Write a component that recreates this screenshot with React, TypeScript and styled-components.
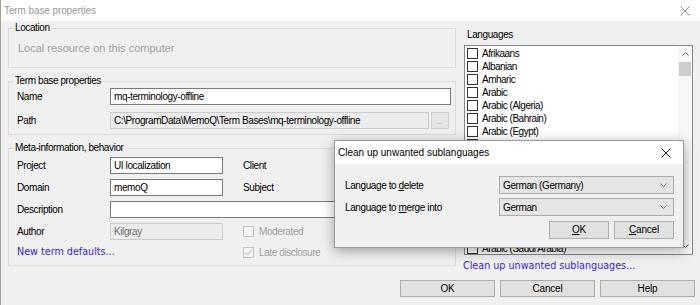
import React from "react";
import styled, { createGlobalStyle } from "styled-components";

const GlobalStyle = createGlobalStyle`
  html, body {
    margin: 0;
    padding: 0;
    background: #f0f0f0;
  }
  body {
    font-family: "Liberation Sans", Arial, sans-serif;
    font-size: 10px;
    letter-spacing: -0.4px;
    color: #000;
  }
  * {
    box-sizing: border-box;
  }
`;

const Window = styled.div`
  position: relative;
  width: 700px;
  height: 305px;
  display: flex;
  flex-direction: column;
  background: #f0f0f0;
  border-left: 1px solid #9aa89a;
  overflow: hidden;
`;

const TitleBar = styled.div<{ $active?: boolean; $h: number; $pr: number }>`
  height: ${(p) => p.$h}px;
  flex: none;
  display: flex;
  align-items: center;
  justify-content: space-between;
  background: #fff;
  padding: 0 ${(p) => p.$pr}px 0 3px;
  color: ${(p) => (p.$active ? "#000" : "#999")};
  letter-spacing: ${(p) => (p.$active ? "0" : "-0.1px")};
`;

const Body = styled.div`
  flex: 1;
  min-height: 0;
  display: flex;
  gap: 6px;
  padding: 0 6px 0 7px;
`;

const LeftCol = styled.div`
  width: 448px;
  flex: none;
  display: flex;
  flex-direction: column;
  gap: 6px;
`;

const Group = styled.fieldset`
  margin: 0;
  padding: 0;
  min-width: 0;
  border: 1px solid #dcdcdc;
`;

const Legend = styled.legend`
  margin-left: 5px;
  padding: 0 1px;
  line-height: 14px;
`;

const LocationText = styled.div`
  padding: 6px 8px 12px 9px;
  font-size: 11px;
  letter-spacing: 0;
  line-height: 14px;
  color: #a0a0a0;
`;

const PropsGrid = styled.div`
  display: grid;
  grid-template-columns: 93px 1fr;
  row-gap: 7px;
  align-items: center;
  padding: 0 4px 5px 8px;
`;

const MetaGrid = styled.div`
  display: grid;
  grid-template-columns: 93px 113px 20px 95px 1fr;
  grid-template-rows: 17px 17px 17px 17px 14px;
  row-gap: 5px;
  align-items: center;
  padding: 2px 4px 6px 8px;
`;

const Label = styled.span<{ $col?: string }>`
  grid-column: ${(p) => p.$col || "auto"};
  white-space: nowrap;
`;

const Field = styled.div<{ $disabled?: boolean; $col?: string }>`
  grid-column: ${(p) => p.$col || "auto"};
  height: 17px;
  display: flex;
  align-items: center;
  padding: 0 3px;
  white-space: nowrap;
  overflow: hidden;
  background: ${(p) => (p.$disabled ? "#ececec" : "#fff")};
  border: 1px solid ${(p) => (p.$disabled ? "#cccccc" : "#7a7a7a")};
  color: ${(p) => (p.$disabled ? "#6d6d6d" : "#000")};
`;

const PathRow = styled.div`
  display: flex;
  gap: 2px;
  padding-right: 2px;
  min-width: 0;
`;

const Browse = styled.div`
  width: 18px;
  height: 17px;
  flex: none;
  display: flex;
  align-items: flex-end;
  justify-content: center;
  padding-bottom: 3px;
  background: #e6e6e6;
  border: 1px solid #cfcfcf;
  color: #a8a8a8;
  font-size: 7px;
  letter-spacing: 0;
`;

const CheckRow = styled.label<{ $col?: string }>`
  grid-column: ${(p) => p.$col || "auto"};
  display: flex;
  align-items: center;
  gap: 5px;
  color: #a0a0a0;
  white-space: nowrap;
`;

const Box = styled.span<{ $disabled?: boolean }>`
  width: 11px;
  height: 11px;
  flex: none;
  display: flex;
  align-items: center;
  justify-content: center;
  background: ${(p) => (p.$disabled ? "#f4f4f4" : "#fff")};
  border: 1px solid ${(p) => (p.$disabled ? "#c4c4c4" : "#333")};
`;

const Link = styled.span<{ $col?: string }>`
  grid-column: ${(p) => p.$col || "auto"};
  font-family: "DejaVu Sans", Verdana, sans-serif;
  font-size: 9.6px;
  letter-spacing: 0;
  line-height: 14px;
  color: #3b23d4;
  white-space: nowrap;
`;

const RightCol = styled.div`
  flex: 1;
  display: flex;
  flex-direction: column;
  padding: 7px 0 0 2px;
`;

const ColTitle = styled.div`
  line-height: 14px;
  padding-left: 3px;
  margin-bottom: 3px;
`;

const ListBox = styled.div`
  height: 210px;
  width: 229px;
  display: flex;
  background: #fff;
  border: 1px solid #828790;
`;

const Items = styled.div`
  flex: 1;
  overflow: hidden;
  padding: 1px 0 0 2px;
`;

const Item = styled.div`
  height: 13px;
  display: flex;
  align-items: center;
  gap: 4px;
  letter-spacing: -0.5px;
  white-space: nowrap;
`;

const ScrollBar = styled.div`
  width: 14px;
  flex: none;
  display: flex;
  flex-direction: column;
  background: #f7f7f7;
`;

const ScrollArrow = styled.div`
  height: 16px;
  display: flex;
  align-items: center;
  justify-content: center;
`;

const Thumb = styled.div`
  height: 14px;
  margin: 0 1px;
  background: #cdcdcd;
`;

const Spacer = styled.div`
  flex: 1;
`;

const BottomLink = styled(Link)`
  margin: 4px 0 0 -1px;
`;

const Footer = styled.div`
  flex: none;
  display: flex;
  justify-content: flex-end;
  gap: 5px;
  padding: 0 5px 8px 0;
`;

const Button = styled.div<{ $w: number; $h: number }>`
  width: ${(p) => p.$w}px;
  height: ${(p) => p.$h}px;
  display: flex;
  align-items: center;
  justify-content: center;
  background: #e1e1e1;
  border: 1px solid #adadad;
  letter-spacing: -0.2px;
`;

const Popup = styled.div`
  position: absolute;
  left: 333px;
  top: 140px;
  width: 350px;
  height: 108px;
  display: flex;
  flex-direction: column;
  background: #f0f0f0;
  border: 1px solid #9a9a9a;
  box-shadow: 0 3px 12px rgba(0, 0, 0, 0.35);
`;

const PopupGrid = styled.div`
  display: grid;
  grid-template-columns: 154px 175px;
  grid-template-rows: 18px 18px 18px;
  row-gap: 4px;
  align-items: center;
  padding: 12px 9px 0 10px;
`;

const Combo = styled.div`
  height: 18px;
  display: flex;
  align-items: center;
  justify-content: space-between;
  padding: 0 6px 0 3px;
  background: #e5e5e5;
  border: 1px solid #acacac;
`;

const PopupButtons = styled.div`
  grid-column: 1 / 3;
  display: flex;
  justify-content: flex-end;
  gap: 5px;
  margin-top: 1px;
`;

const languages = [
  "Afrikaans",
  "Albanian",
  "Amharic",
  "Arabic",
  "Arabic (Algeria)",
  "Arabic (Bahrain)",
  "Arabic (Egypt)",
  "Arabic (Iraq)",
  "Arabic (Jordan)",
  "Arabic (Kuwait)",
  "Arabic (Lebanon)",
  "Arabic (Libya)",
  "Arabic (Morocco)",
  "Arabic (Oman)",
  "Arabic (Qatar)",
  "Arabic (Saudi Arabia)",
  "Arabic (Syria)",
];

const CloseIcon = ({ color }: { color: string }) => (
  <svg width="10" height="10" viewBox="0 0 10 10">
    <path d="M0.5 0.5L9.5 9.5M9.5 0.5L0.5 9.5" stroke={color} strokeWidth="1" fill="none" />
  </svg>
);

const Chevron = ({ up, color }: { up?: boolean; color: string }) => (
  <svg width="7" height="4" viewBox="0 0 7 4">
    <polyline
      points={up ? "0.5,3.5 3.5,0.5 6.5,3.5" : "0.5,0.5 3.5,3.5 6.5,0.5"}
      stroke={color}
      strokeWidth="1"
      fill="none"
    />
  </svg>
);

const Tick = () => (
  <svg width="9" height="9" viewBox="0 0 9 9">
    <polyline points="1,4.5 3.5,7 8,1.5" stroke="#b0b0b0" strokeWidth="1" fill="none" />
  </svg>
);

function App() {
  return (
    <>
      <GlobalStyle />
      <Window>
        <TitleBar $h={21} $pr={10}>
          <span>Term base properties</span>
          <CloseIcon color="#8c8c8c" />
        </TitleBar>
        <Body>
          <LeftCol>
            <Group>
              <Legend>Location</Legend>
              <LocationText>Local resource on this computer</LocationText>
            </Group>
            <Group>
              <Legend>Term base properties</Legend>
              <PropsGrid>
                <Label>Name</Label>
                <Field>mq-terminology-offline</Field>
                <Label>Path</Label>
                <PathRow>
                  <Field $disabled style={{ flex: 1, color: "#000" }}>
                    C:\ProgramData\MemoQ\Term Bases\mq-terminology-offline
                  </Field>
                  <Browse>...</Browse>
                </PathRow>
              </PropsGrid>
            </Group>
            <Group>
              <Legend>Meta-information, behavior</Legend>
              <MetaGrid>
                <Label>Project</Label>
                <Field>UI localization</Field>
                <Label $col="4">Client</Label>
                <Field />
                <Label>Domain</Label>
                <Field>memoQ</Field>
                <Label $col="4">Subject</Label>
                <Field />
                <Label>Description</Label>
                <Field $col="2 / 6" />
                <Label>Author</Label>
                <Field $disabled>Kilgray</Field>
                <CheckRow $col="4 / 6">
                  <Box $disabled />
                  Moderated
                </CheckRow>
                <Link $col="1 / 3">New term defaults...</Link>
                <CheckRow $col="4 / 6">
                  <Box $disabled>
                    <Tick />
                  </Box>
                  Late disclosure
                </CheckRow>
              </MetaGrid>
            </Group>
          </LeftCol>
          <RightCol>
            <ColTitle>Languages</ColTitle>
            <ListBox>
              <Items>
                {languages.map((lang) => (
                  <Item key={lang}>
                    <Box />
                    {lang}
                  </Item>
                ))}
              </Items>
              <ScrollBar>
                <ScrollArrow>
                  <Chevron up color="#606060" />
                </ScrollArrow>
                <Thumb />
                <Spacer />
                <ScrollArrow>
                  <Chevron color="#606060" />
                </ScrollArrow>
              </ScrollBar>
            </ListBox>
            <BottomLink>Clean up unwanted sublanguages...</BottomLink>
          </RightCol>
        </Body>
        <Footer>
          <Button $w={95} $h={17}>OK</Button>
          <Button $w={95} $h={17}>Cancel</Button>
          <Button $w={95} $h={17}>Help</Button>
        </Footer>

        <Popup>
          <TitleBar $active $h={23} $pr={12}>
            <span>Clean up unwanted sublanguages</span>
            <CloseIcon color="#222" />
          </TitleBar>
          <PopupGrid>
            <Label>
              Language to <u>d</u>elete
            </Label>
            <Combo>
              <span>German (Germany)</span>
              <Chevron color="#7a7a7a" />
            </Combo>
            <Label>
              Language to <u>m</u>erge into
            </Label>
            <Combo>
              <span>German</span>
              <Chevron color="#7a7a7a" />
            </Combo>
            <PopupButtons>
              <Button $w={60} $h={18}>
                <u>O</u>K
              </Button>
              <Button $w={60} $h={18}>
                <u>C</u>ancel
              </Button>
            </PopupButtons>
          </PopupGrid>
        </Popup>
      </Window>
    </>
  );
}

export default App;
